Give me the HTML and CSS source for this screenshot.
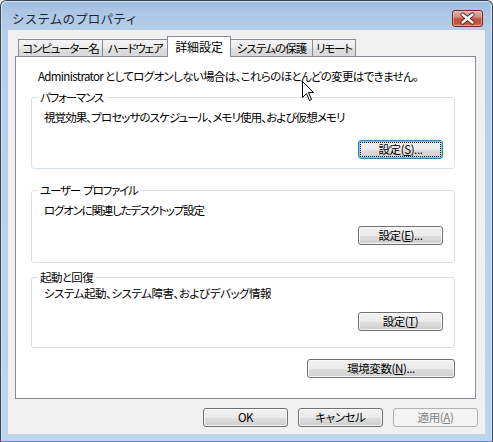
FILE: index.html
```html
<!DOCTYPE html>
<html lang="ja">
<head>
<meta charset="utf-8">
<title>システムのプロパティ</title>
<link rel="stylesheet" href="styles.css">
</head>
<body>
<div class="window">
  <div class="titlebar">
    <span class="title">システムのプロパティ</span>
    <button class="close" aria-label="閉じる">
      <svg width="29" height="15" viewBox="0 0 29 15">
        <path d="M9.5 3.5 L19.5 11.5 M19.5 3.5 L9.5 11.5" stroke="#5a2a24" stroke-width="4.2" stroke-linecap="round" fill="none"/>
        <path d="M9.5 3.5 L19.5 11.5 M19.5 3.5 L9.5 11.5" stroke="#ffffff" stroke-width="2.4" stroke-linecap="round" fill="none"/>
      </svg>
    </button>
  </div>
  <div class="client">
    <div class="tabs">
      <div class="tab t1">コンピューター名</div>
      <div class="tab t2">ハードウェア</div>
      <div class="tab t3 active">詳細設定</div>
      <div class="tab t4">システムの保護</div>
      <div class="tab t5">リモート</div>
    </div>
    <div class="panel">
      <p class="note">Administrator としてログオンしない場合は、これらのほとんどの変更はできません。</p>
      <fieldset class="group g1">
        <legend>パフォーマンス</legend>
        <p class="desc">視覚効果、プロセッサのスケジュール、メモリ使用、および仮想メモリ</p>
        <div class="row"><button class="btn focused"><span class="focus">設定(<u>S</u>)...</span></button></div>
      </fieldset>
      <fieldset class="group g2">
        <legend>ユーザー プロファイル</legend>
        <p class="desc">ログオンに関連したデスクトップ設定</p>
        <div class="row"><button class="btn">設定(<u>E</u>)...</button></div>
      </fieldset>
      <fieldset class="group g3">
        <legend>起動と回復</legend>
        <p class="desc">システム起動、システム障害、およびデバッグ情報</p>
        <div class="row"><button class="btn">設定(<u>T</u>)</button></div>
      </fieldset>
      <div class="row env"><button class="btn wide">環境変数(<u>N</u>)...</button></div>
    </div>
    <div class="footer">
      <button class="btn">OK</button>
      <button class="btn">キャンセル</button>
      <button class="btn" disabled>適用(<u>A</u>)</button>
    </div>
  </div>
  <svg class="cursor" width="13" height="21" viewBox="0 0 13 21">
    <path d="M0.5 0.5 L0.5 16.5 L4.5 12.5 L7.5 19.5 L9.5 18.5 L6.5 11.5 L11.5 11.5 Z" fill="#ffffff" stroke="#000000" stroke-width="1" stroke-linejoin="miter"/>
  </svg>
</div>
</body>
</html>
```

FILE: styles.css
```css
* { box-sizing: border-box; }
html, body { margin: 0; padding: 0; background: #ffffff; }
body {
  font-family: "Noto Sans CJK JP", "Noto Sans", sans-serif;
  font-size: 11.5px;
  line-height: 14px;
  color: #000;
}

.window {
  position: relative;
  width: 493px;
  height: 442px;
  border: 1px solid #34465a;
  border-bottom-color: #23a3d0;
  border-radius: 6px 6px 0 0;
  background: linear-gradient(180deg, #9fbbdc 0px, #aec7e4 12px, #b6cee9 30px, #bcd4ec 100%);
  box-shadow: inset 1px 1px 0 #d6e4f3, inset -1px 0 0 #d6e4f3;
  display: flex;
  flex-direction: column;
  overflow: hidden;
}

.titlebar {
  height: 29px;
  flex: none;
  display: flex;
  align-items: center;
  justify-content: space-between;
  padding: 6px 9px 0 11px;
}
.title {
  font-size: 12.5px;
  letter-spacing: 0.2px;
  color: #1c2733;
}
.close {
  width: 31px;
  height: 17px;
  padding: 0;
  margin: 0;
  border: 1px solid #6b2b22;
  border-radius: 3px;
  background: linear-gradient(180deg, #e7b0a6 0%, #d88c7e 40%, #c2523f 52%, #c4523c 80%, #d4735c 100%);
  box-shadow: inset 0 0 0 1px rgba(255, 225, 215, 0.45);
  display: flex;
  align-items: center;
  justify-content: center;
}
.close svg { display: block; }

.client {
  flex: none;
  height: 404px;
  margin: 0 7px;
  background: #f0f0f0;
  padding: 6px 9px 0 7px;
  display: flex;
  flex-direction: column;
}

.tabs {
  display: flex;
  align-items: flex-end;
  height: 20px;
  padding-left: 3px;
  flex: none;
}
.tab {
  height: 17px;
  border: 1px solid #898c95;
  border-bottom: none;
  background: linear-gradient(180deg, #f4f4f4 0%, #ebebeb 50%, #dedede 55%, #d8d8d8 100%);
  display: flex;
  align-items: center;
  justify-content: center;
  font-size: 11.5px;
  line-height: 15px;
  letter-spacing: -1.2px;
  font-feature-settings: "palt";
  white-space: nowrap;
  overflow: visible;
}
.tab + .tab { border-left: none; }
.t1 { width: 85px; }
.t2 { width: 64px; border-right: none; }
.t3 { width: 64px; }
.t4 { width: 82px; letter-spacing: -0.9px; }
.t5 { width: 43px; }
.tab.active {
  height: 21px;
  margin-bottom: -1px;
  padding-bottom: 2px;
  background: #ffffff;
  position: relative;
  z-index: 1;
  border-left: 1px solid #898c95;
  letter-spacing: -0.1px;
  font-size: 12px;
}

.panel {
  flex: none;
  height: 343px;
  background: #ffffff;
  border: 1px solid #898c95;
  padding: 0 20px 0 15px;
  display: flex;
  flex-direction: column;
  align-items: stretch;
}

.note {
  margin: 12px 0 0;
  padding-left: 7px;
  font-feature-settings: "palt";
  letter-spacing: -0.65px;
  white-space: nowrap;
}

.group {
  margin: 0;
  border: 1px solid #d5dfe5;
  border-radius: 3px;
  padding: 0 11px 0 12px;
  min-width: 0;
}
.group legend {
  padding: 0 3px 0 2px;
  margin-left: -6px;
  font-feature-settings: "palt";
  line-height: 14px;
  letter-spacing: -1.2px;
}
.g2 legend { word-spacing: 2px; }
.g3 legend { letter-spacing: -0.6px; }
.desc {
  margin: 6px 0 0;
  font-feature-settings: "palt";
  white-space: nowrap;
}
.g1 .desc { letter-spacing: -0.9px; }
.g2 .desc { letter-spacing: -1.2px; }
.g3 .desc { letter-spacing: -0.45px; }
.row {
  display: flex;
  justify-content: flex-end;
}
.g1 { margin-top: 7px; padding-bottom: 9px; }
.g1 .row { margin-top: 16px; }
.g2 { margin-top: 14px; padding-bottom: 17px; }
.g2 .row { margin-top: 9px; }
.g3 { margin-top: 7px; padding-bottom: 16px; }
.g3 .desc { margin-top: 2px; }
.g3 .row { margin-top: 12px; }
.env { margin-top: 11px; }

.btn {
  width: 85px;
  height: 19px;
  padding: 0;
  margin: 0;
  border: 1px solid #707070;
  border-radius: 3px;
  background: linear-gradient(180deg, #f2f2f2 0%, #ebebeb 50%, #dddddd 51%, #cfcfcf 100%);
  box-shadow: inset 0 0 0 1px rgba(252, 252, 252, 0.8);
  font-family: inherit;
  font-size: 11.5px;
  line-height: 15px;
  letter-spacing: -0.4px;
  color: #000;
  font-feature-settings: "palt";
  display: flex;
  align-items: center;
  justify-content: center;
}
.btn u { text-decoration: underline; text-underline-offset: 1px; }
.btn.wide { width: 148px; }
.btn.focused {
  border-color: #3c7fb1;
  box-shadow: inset 0 0 0 1px #5fd4f7, inset 0 0 0 2px rgba(180, 235, 252, 0.7);
}
.btn .focus {
  display: flex;
  align-items: center;
  justify-content: center;
  width: 79px;
  height: 13px;
  outline: 1px dotted #000;
}
.btn:disabled {
  border-color: #adb2b5;
  background: #f4f4f4;
  box-shadow: none;
  color: #838383;
}

.footer {
  display: flex;
  justify-content: flex-end;
  gap: 10px;
  margin: 9px -2px 0 0;
}

.cursor {
  position: absolute;
  left: 301px;
  top: 80px;
  pointer-events: none;
}
```
